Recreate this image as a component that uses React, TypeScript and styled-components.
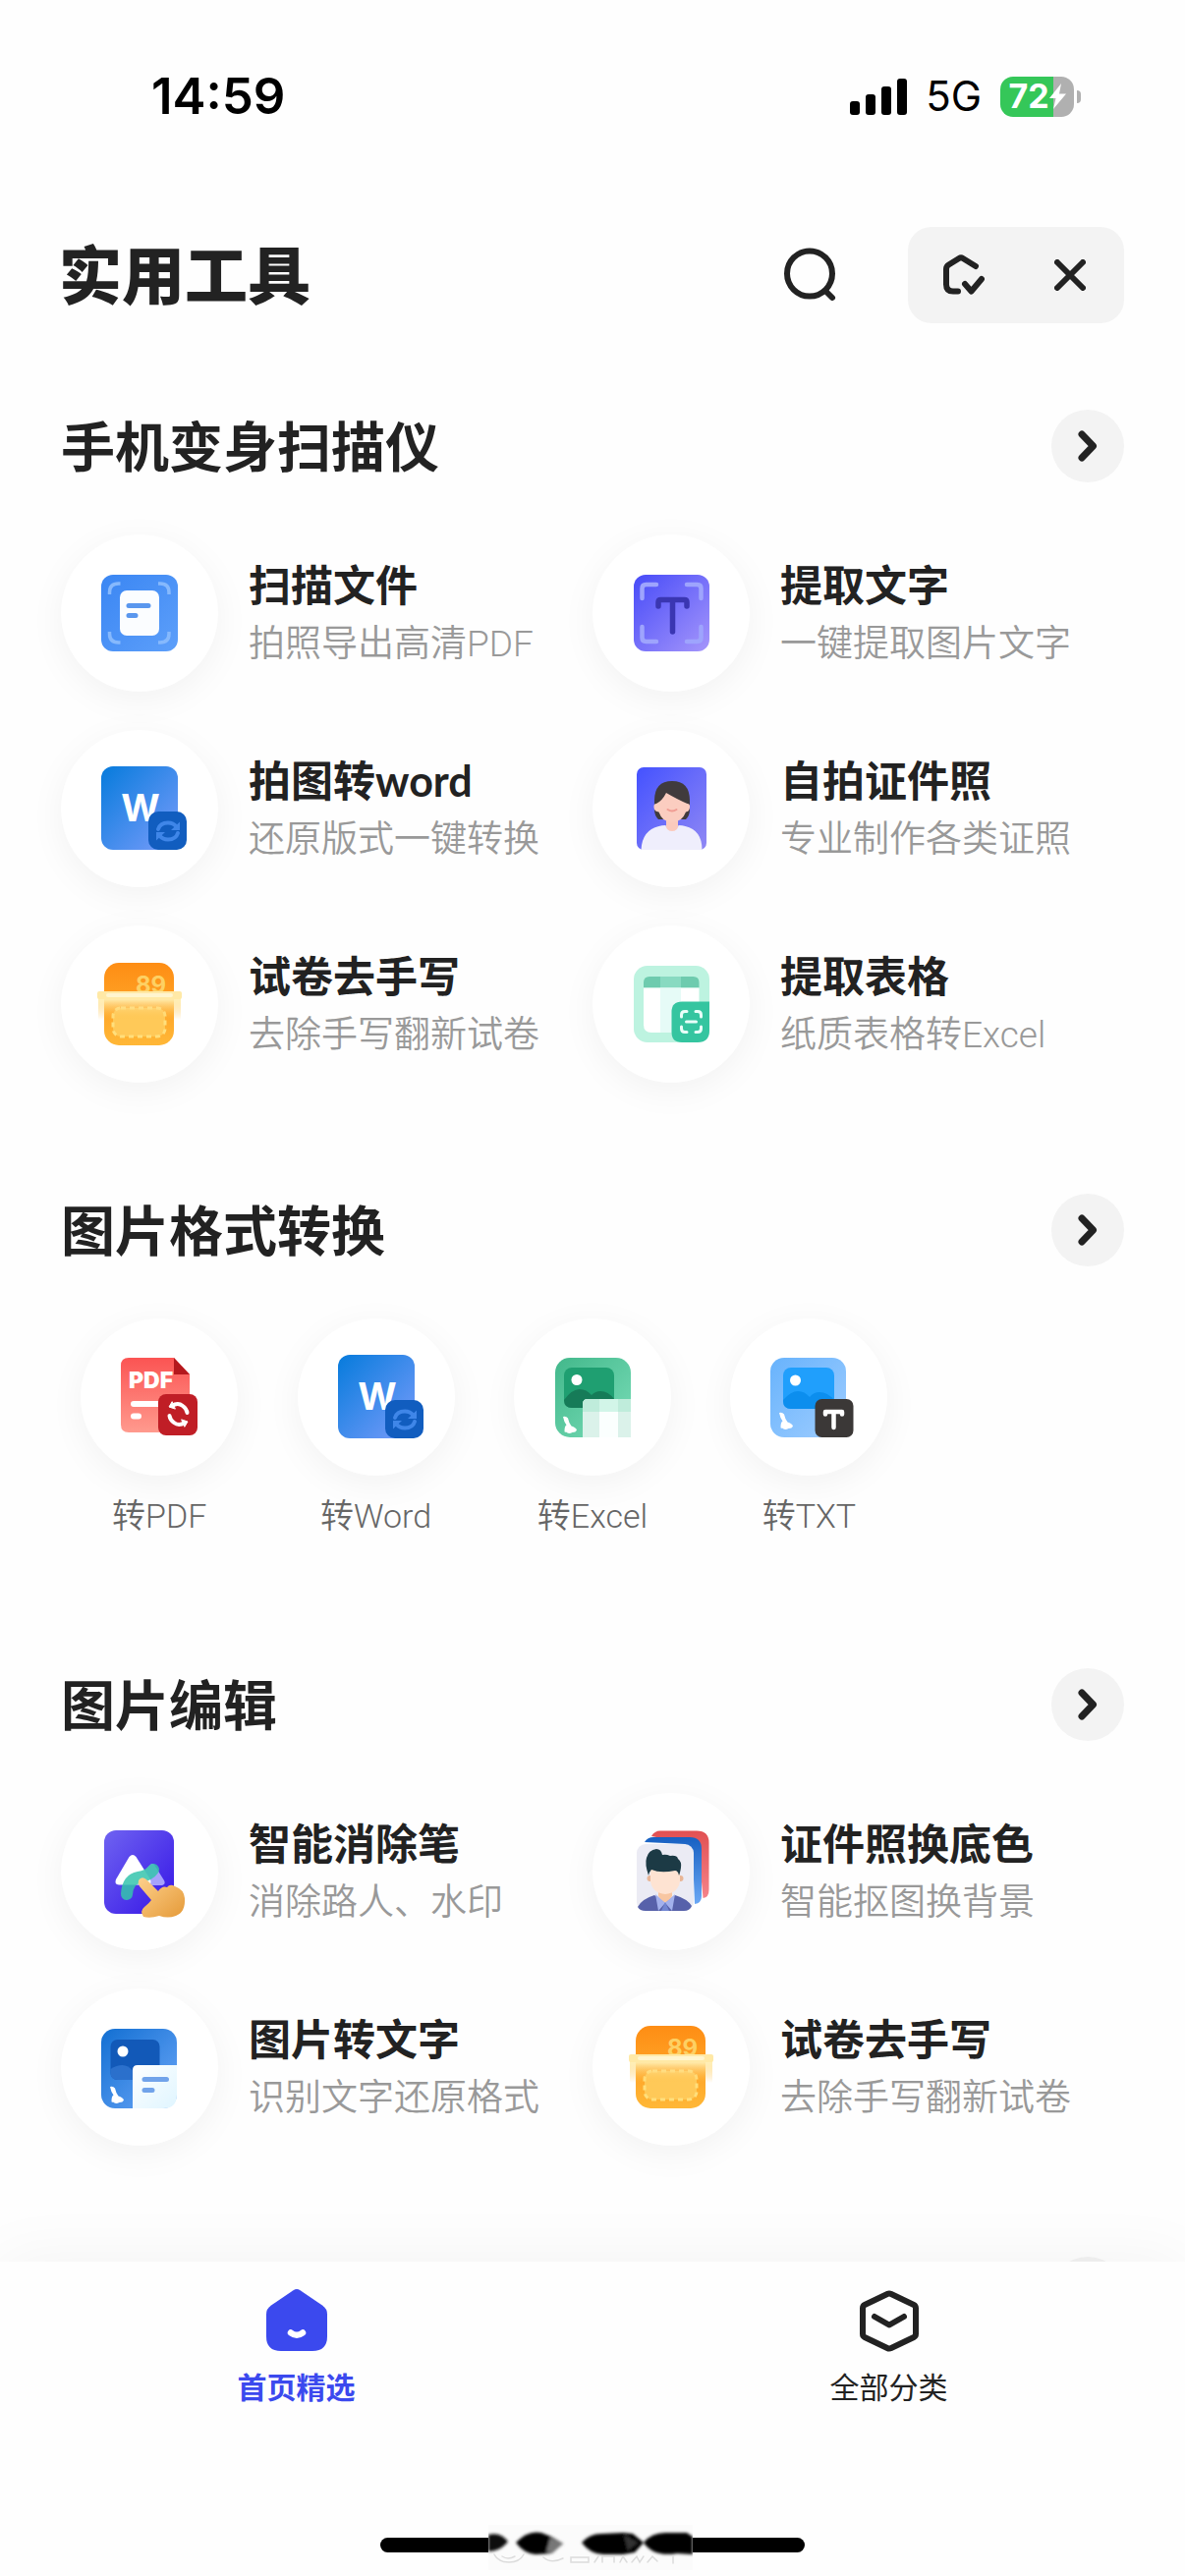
import React, { useId } from "react";
import styled, { createGlobalStyle } from "styled-components";

const heading = `Lato, "Noto Sans CJK SC", sans-serif`;
const mixed = `Roboto, "Noto Sans CJK SC", sans-serif`;
const ui = `Inter, "Noto Sans CJK SC", sans-serif`;

const GlobalStyle = createGlobalStyle`
  * { box-sizing: border-box; }
  html, body, #root { height: 100%; }
  body { margin: 0; background: #fefefe; color: #222; font-family: ${heading}; }
  h1, h2, p, ul { margin: 0; padding: 0; }
  ul { list-style: none; }
  button { border: 0; padding: 0; background: none; color: inherit; font: inherit; cursor: pointer; }
  svg { display: block; flex: none; }
`;

/* ---------- layout ---------- */

const Screen = styled.div`
  display: flex;
  flex-direction: column;
  height: 100vh;
  overflow: hidden;
`;

const StatusBar = styled.div`
  flex: none;
  display: flex;
  align-items: center;
  justify-content: space-between;
  height: 196px;
  padding: 0 106px 0 154px;
  color: #000;
  font-family: ${ui};
`;

const Clock = styled.time`
  font-size: 51px;
  font-weight: 600;
  line-height: 60px;
`;

const StatusIcons = styled.div`
  display: flex;
  align-items: center;
  gap: 19px;
`;

const Network = styled.span`
  font-size: 42px;
  font-weight: 400;
  line-height: 48px;
`;

const Battery = styled.div`
  display: flex;
  align-items: center;
  gap: 3px;
`;

const BatteryBody = styled.div`
  display: flex;
  align-items: center;
  justify-content: center;
  width: 75px;
  height: 41px;
  border-radius: 13px;
  background: linear-gradient(90deg, #35c759 72%, #b0b0b0 72%);
  color: #fff;
  font-size: 34px;
  font-weight: 700;
  line-height: 40px;
`;

const BatteryNub = styled.div`
  width: 4px;
  height: 13px;
  border-radius: 0 4px 4px 0;
  background: #b0b0b0;
`;

const Header = styled.header`
  flex: none;
  display: flex;
  align-items: center;
  padding: 35px 62px 0 60px;
`;

const AppTitle = styled.h1`
  flex: 1;
  font-size: 64px;
  font-weight: 900;
  line-height: 96px;
`;

const SearchButton = styled.button`
  margin-right: 72px;
`;

const Capsule = styled.div`
  display: flex;
  height: 98px;
  border-radius: 24px;
  background: #f3f3f3;
`;

const CapsuleButton = styled.button`
  display: flex;
  align-items: center;
  justify-content: center;
  width: 110px;
`;

const Content = styled.main`
  flex: 1 1 0;
  min-height: 0;
  display: flex;
  flex-direction: column;
  gap: 113px;
  padding-top: 88px;
  overflow-y: auto;
  scrollbar-width: none;
`;

const Section = styled.section`
  flex: none;
`;

const SectionHead = styled.div`
  display: flex;
  align-items: center;
  height: 74px;
  margin: 0 62px 53px;
`;

const SectionTitle = styled.h2`
  font-size: 55px;
  font-weight: 700;
  line-height: 74px;
`;

const MoreButton = styled.button`
  display: flex;
  align-items: center;
  justify-content: center;
  width: 74px;
  height: 74px;
  margin-left: auto;
  border-radius: 50%;
  background: #f3f3f3;
`;

const ToolGrid = styled.ul`
  display: grid;
  grid-template-columns: 1fr 1fr;
  row-gap: 39px;
  padding: 0 62px;
`;

const ToolButton = styled.button`
  display: flex;
  align-items: center;
  gap: 31px;
  width: 100%;
  text-align: left;
`;

const IconDisc = styled.span`
  flex: none;
  display: block;
  width: 160px;
  height: 160px;
  border-radius: 50%;
  background: #fff;
  box-shadow: 0 8px 36px rgba(0, 0, 0, 0.05);
`;

const ToolText = styled.span`
  display: flex;
  flex-direction: column;
  gap: 2px;
  padding-top: 4px;
  white-space: nowrap;
`;

const ToolName = styled.span`
  font-size: 43px;
  font-weight: 700;
  line-height: 58px;
`;

const ToolHint = styled.span`
  color: #999;
  font-family: ${mixed};
  font-size: 37px;
  font-weight: 350;
  line-height: 58px;
`;

const FormatGrid = styled.ul`
  display: grid;
  grid-template-columns: repeat(5, 1fr);
  padding: 0 52px 18px;
`;

const FormatButton = styled.button`
  display: flex;
  flex-direction: column;
  align-items: center;
  gap: 17px;
  width: 100%;
`;

const FormatLabel = styled.span`
  color: #666;
  font-family: ${mixed};
  font-size: 34px;
  font-weight: 350;
  line-height: 48px;
`;

const BottomBar = styled.footer`
  flex: none;
  position: relative;
  padding: 28px 0 24px;
  background: #fefefe;
  box-shadow: 0 0 64px rgba(0, 0, 0, 0.05);
`;

const Tabs = styled.nav`
  display: grid;
  grid-template-columns: 1fr 1fr;
  margin-bottom: 134px;
`;

const Tab = styled.a<{ $active?: boolean }>`
  display: flex;
  flex-direction: column;
  align-items: center;
  gap: 15px;
  color: ${(p) => (p.$active ? "#3b49ee" : "#222")};
  font-size: 30px;
  font-weight: ${(p) => (p.$active ? 700 : 400)};
  line-height: 40px;
  text-decoration: none;
`;

const HomeIndicator = styled.div`
  position: relative;
  width: 432px;
  height: 15px;
  margin: 0 auto;
  border-radius: 8px;
  background: #000;
`;

const Smudge = styled.svg`
  position: absolute;
  left: 110px;
  top: -13px;
`;

/* ---------- glyph icons ---------- */

const line = {
  fill: "none",
  stroke: "#222",
  strokeWidth: 6,
  strokeLinecap: "round" as const,
  strokeLinejoin: "round" as const,
};

const Signal = () => (
  <svg width="58" height="38" aria-hidden="true">
    <rect x="0" y="24" width="10" height="14" rx="3" />
    <rect x="16" y="17" width="10" height="21" rx="3" />
    <rect x="32" y="9" width="10" height="29" rx="3" />
    <rect x="48" y="1" width="10" height="37" rx="3" />
  </svg>
);

const Bolt = () => (
  <svg width="17" height="26" viewBox="0 0 17 26" aria-hidden="true">
    <path d="M12 0 0 15h6.500L4 26 17 10.500h-7z" fill="#fff" />
  </svg>
);

const SearchIcon = () => (
  <svg width="54" height="56" viewBox="0 0 54 56" aria-hidden="true">
    <circle cx="26" cy="26.500" r="23" {...line} />
    <path d="m42 44 7 7" {...line} />
  </svg>
);

const HouseCheckIcon = () => (
  <svg width="46" height="44" viewBox="-2 0 46 44" aria-hidden="true">
    <path
      d="M17 38.500h-5Q5 38.500 5 31.500V16q0-3 2.500-4.500L18 5q2-1.200 4 0l13 8M24 31l6.500 7.500L41 26"
      {...line}
    />
  </svg>
);

const CloseIcon = () => (
  <svg width="32" height="32" viewBox="0 0 32 32" aria-hidden="true">
    <path d="m3 3 26 26M29 3 3 29" {...line} />
  </svg>
);

const ChevronIcon = () => (
  <svg width="20" height="32" viewBox="0 0 20 32" aria-hidden="true">
    <path d="m4 4 11.500 12L4 28" {...line} strokeWidth={7} />
  </svg>
);

const HomeTabIcon = () => (
  <svg width="64" height="64" viewBox="0 0 64 64" aria-hidden="true">
    <path
      d="M28.500 1.200q3.500-2.200 7 0L58 16.500q5 3.500 5 9V48q0 15-15 15H16Q1 63 1 48V25.500q0-5.500 5-9z"
      fill="currentColor"
    />
    <path d="M26 44.500q6 4.500 12 0" fill="none" stroke="#fff" strokeWidth="6.500" strokeLinecap="round" />
  </svg>
);

const CategoryTabIcon = () => (
  <svg width="64" height="64" viewBox="0 0 64 64" aria-hidden="true">
    <path
      d="M30 5q2-1 4 0l23 11q2 1 2 3.500v26q0 2.500-2 3.500L34 60q-2 1-4 0L7 49q-2-1-2-3.500v-26Q5 17 7 16z"
      {...line}
    />
    <path d="m17 28 15 8.500L47 28" {...line} />
  </svg>
);

/* ---------- tool illustrations, drawn on the 160px disc ---------- */

type Stop = string;

const useFill = (from: Stop, to: Stop, diagonal = true) => {
  const id = "f" + useId().replace(/\W/g, "");
  const def = (
    <linearGradient id={id} x1="0" y1="0" x2={diagonal ? "1" : "0"} y2="1">
      <stop offset="0" stopColor={from} />
      <stop offset="1" stopColor={to} />
    </linearGradient>
  );
  return [def, `url(#${id})`] as const;
};

const Art = ({ children }: { children: React.ReactNode }) => (
  <svg width="160" height="160" viewBox="0 0 160 160" aria-hidden="true">
    {children}
  </svg>
);

const Sync = ({ x, y, color }: { x: number; y: number; color: string }) => (
  <g transform={`translate(${x} ${y})`} fill="none" stroke={color} strokeWidth="4" strokeLinecap="round">
    <path d="M-10-2Q-8-8.500 0-8.500q5.500 0 8.500 4" />
    <path d="M10 2Q8 8.500 0 8.500q-5.500 0-8.500-4" />
    <path d="M12-9.500V-1H3zM-12 9.500V1h9z" fill={color} stroke="none" />
  </g>
);

const ScanArt = () => {
  const [def, fill] = useFill("#3a86f3", "#5d9ffa");
  return (
    <Art>
      <defs>{def}</defs>
      <rect x="41" y="41" width="78" height="78" rx="12" fill={fill} />
      <path
        d="M49.500 61v-2q0-9 9-9h2M99 50h2q9 0 9 9v2M110 99v2q0 9-9 9h-2M60.500 110h-2q-9 0-9-9v-2"
        fill="none"
        stroke="#86b9fd"
        strokeWidth="3.500"
      />
      <rect x="60" y="57" width="40" height="46" rx="7" fill="#fbfdff" />
      <path d="M69 72.500h20M69 82.500h7" stroke="#5a97ee" strokeWidth="5" strokeLinecap="round" />
    </Art>
  );
};

const ExtractTextArt = () => {
  const [def, fill] = useFill("#474bf8", "#a596fb");
  return (
    <Art>
      <defs>{def}</defs>
      <rect x="42" y="41" width="77" height="78" rx="12" fill={fill} />
      <path
        d="M50.500 65V55q0-4 4-4H65M96 51h10.500q4 0 4 4v10M110.500 94v11q0 4-4 4H96M65 109H54.500q-4 0-4-4V94"
        fill="none"
        stroke="#9ea4fd"
        strokeWidth="4.500"
        strokeLinecap="round"
      />
      <path
        d="M67 73v-4q0-2.500 2.500-2.500h24q2.500 0 2.500 2.500v4M81.500 67v32"
        fill="none"
        stroke="#3a36b2"
        strokeWidth="5.500"
        strokeLinecap="round"
      />
    </Art>
  );
};

const WordArt = () => {
  const [def, fill] = useFill("#067bdc", "#7a9cfb");
  return (
    <Art>
      <defs>{def}</defs>
      <rect x="41" y="37" width="78" height="85" rx="12" fill={fill} />
      <text x="81" y="93" textAnchor="middle" fontFamily="Inter, sans-serif" fontSize="38" fontWeight="650" fill="#fff">
        W
      </text>
      <rect x="89" y="83" width="39" height="39" rx="10" fill="#115dbf" />
      <Sync x={109} y={103} color="#3f86e8" />
    </Art>
  );
};

const PortraitArt = () => {
  const [def, fill] = useFill("#4452ff", "#9088f4");
  return (
    <Art>
      <defs>{def}</defs>
      <rect x="45" y="38" width="71" height="84" rx="7" fill={fill} />
      <path d="M63 72q0-20 18-20t18 20v9q0 6-4 10H67q-4-4-4-10z" fill="#403b3d" />
      <path d="M75 88h12v11q4 3 7 3-6 8-13 8t-13-8q4 0 7-3z" fill="#fbcabd" />
      <path
        d="M75 64q-4 8-10 11-3 0-2.500 4t5 4.500Q71 94 81 94t14-10.500q3.500-.5 4-4.500t-2.500-4Q87 71 75 64z"
        fill="#fbcdc0"
      />
      <path d="M76.500 81q4.500 3 9 0" fill="none" stroke="#f09c93" strokeWidth="2" strokeLinecap="round" />
      <path d="M49.500 122q1-20 18-24 3-1 7-1 1 6 6.500 6t6.500-6q4 0 7 1 17 4 17 24z" fill="#efeefc" />
    </Art>
  );
};

const ExamArt = () => {
  const [def, fill] = useFill("#fe8d14", "#ffb737", false);
  const [glowDef, glow] = useFill("#fff1b8", "#ffc14a00", false);
  return (
    <Art>
      <defs>
        {def}
        {glowDef}
      </defs>
      <rect x="44" y="38" width="71" height="84" rx="15" fill={fill} />
      <text x="76" y="69" fontFamily="Inter, sans-serif" fontSize="24" fontWeight="700" fill="#fdd063">
        89
      </text>
      <rect
        x="53"
        y="84"
        width="53"
        height="29"
        rx="8"
        fill="#ffc958"
        stroke="#ffdf7c"
        strokeWidth="3"
        strokeDasharray="5 4"
      />
      <rect x="38" y="74" width="84" height="22" fill={glow} />
      <rect x="37" y="67" width="86" height="8" rx="2" fill="#ffe9a6" />
      <rect x="46" y="69" width="68" height="4" rx="2" fill="#fff5cf" />
    </Art>
  );
};

const TableArt = () => (
  <Art>
    <rect x="42" y="41" width="77" height="78" rx="14" fill="#bdf3e0" />
    <path d="M52 63.500V58q0-6 6-6h44.500q6 0 6 6v5.500z" fill="#6ecbae" />
    <path d="M69 52h21v11.500H69z" fill="#88dac1" />
    <path d="M52 63.500h56.500V109H60q-8 0-8-8z" fill="#fff" />
    <path d="M69 63.500h21V109H69z" fill="#e6fbf7" />
    <path d="M80.500 88q0-10.500 10.500-10.500h28V107q0 12-12 12H91q-10.500 0-10.500-10.500z" fill="#35c5a0" />
    <path
      d="M90.500 93v-2q0-3.500 3.500-3.500h2M105 87.500h2q3.500 0 3.500 3.500v2M110.500 103v2q0 3.500-3.500 3.500h-2M96 108.500h-2q-3.500 0-3.500-3.500v-2M95.500 98h10"
      fill="none"
      stroke="#e9fff9"
      strokeWidth="3"
      strokeLinecap="round"
    />
  </Art>
);

const PdfArt = () => {
  const [def, fill] = useFill("#fb5453", "#ff9a8e", false);
  return (
    <Art>
      <defs>{def}</defs>
      <path d="M49 40h46l16 17v51q0 8-8 8H49q-8 0-8-8V48q0-8 8-8z" fill={fill} />
      <path d="M95 40v17h16z" fill="#b4181d" />
      <text x="49" y="70.500" fontFamily="Inter, sans-serif" fontSize="23" fontWeight="900" fill="#fff">
        PDF
      </text>
      <path d="M54 87h28M54 99.500h5" stroke="#fff" strokeWidth="6" strokeLinecap="round" />
      <rect x="79" y="77" width="40" height="42" rx="8" fill="#c01e26" />
      <g fill="none" stroke="#fff" strokeWidth="4" strokeLinecap="round">
        <path d="M93 89q6-4 11 0 4 3 4.500 7" />
        <path d="M106 106q-6 4-11 0-4-3-4.500-7" />
        <path d="m93 85-3 5 6 2zM106 110l3-5-6-2z" fill="#fff" strokeWidth="1" />
      </g>
    </Art>
  );
};

const Bird = ({ y = 0 }: { y?: number }) => (
  <path
    transform={`translate(0 ${y})`}
    d="M50 100q3-1 5 1.500 1 5 3.500 8 4.500 1.500 5.500 4-1 2.500-4.500 2.500-4 2-6.500-.5-1.500 1-1.500-1 0-5 2-6-2.500-3-3.500-8.500z"
    fill="#fff"
  />
);

const ExcelArt = () => {
  const [def, fill] = useFill("#42b88b", "#7addb8");
  return (
    <Art>
      <defs>{def}</defs>
      <rect x="42" y="40" width="77" height="81" rx="15" fill={fill} />
      <rect x="51" y="50" width="51" height="41" rx="8" fill="#1f9f71" />
      <path d="M51 83q8-11 16-11 7 0 12 6 4-4 9-4 8 0 14 8v1q0 8-8 8H59q-8 0-8-8z" fill="#167b58" />
      <circle cx="64" cy="62.500" r="5.500" fill="#fff" />
      <path d="M70 121V87q0-5 5-5h44v39z" fill="#dbf2ea" />
      <path d="M70 95v-8q0-5 5-5h44v13z" fill="#bfecdb" />
      <path d="M87 82h19v13H87z" fill="#d2f5e8" />
      <path d="M87 95h19v26H87z" fill="#fbfffe" />
      <Bird />
    </Art>
  );
};

const TxtArt = () => {
  const [def, fill] = useFill("#68b3fc", "#9fcdff");
  return (
    <Art>
      <defs>{def}</defs>
      <rect x="41" y="40" width="77" height="81" rx="14" fill={fill} />
      <rect x="54" y="50" width="52" height="42" rx="8" fill="#209ffc" />
      <path d="M54 83q8-9 15-9t12 6q4-5 10-5 8 0 15 8v1q0 8-8 8H62q-8 0-8-8z" fill="#0c8eee" />
      <circle cx="66.500" cy="63" r="5.500" fill="#fff" />
      <rect x="86.500" y="82" width="39" height="39" rx="7" fill="#3b3837" />
      <path
        d="M97 97.500V95h17v2.500M105.500 95v16"
        fill="none"
        stroke="#fff"
        strokeWidth="4.500"
        strokeLinecap="round"
        strokeLinejoin="round"
      />
      <Bird y={-4} />
    </Art>
  );
};

const EraserArt = () => {
  const [def, fill] = useFill("#6f63f1", "#3514e6");
  const [handDef, hand] = useFill("#fdd08c", "#e59a38");
  return (
    <Art>
      <defs>
        {def}
        {handDef}
      </defs>
      <rect x="44" y="38" width="71" height="85" rx="12" fill={fill} />
      <path d="M91 73q2-2 4 0l10 16q2 4-2 5H84l-5-9z" fill="#a6a2fb" />
      <path d="M69.500 65q3.500-4 7 0L91 88q2 5-3 5.500H59q-5-.5-3-5.500z" fill="#fff" />
      <path
        d="M67 103q1-15 12-17t15-8"
        fill="none"
        stroke="#35c4ad"
        strokeOpacity="0.850"
        strokeWidth="12"
        strokeLinecap="round"
      />
      <path
        d="M79 89q3-5 8-1l12 12q4-6 9-4 3-4 8-1 9 3 10 12 1 14-9 18-8 3-17 0-9 3-16 1-4-6 1-10 5-4 7-7L80 95q-2-3-1-6z"
        fill={hand}
      />
    </Art>
  );
};

const IdPhotoArt = () => {
  const [redDef, red] = useFill("#e15052", "#f5838a", false);
  const [blueDef, blue] = useFill("#1760c2", "#6ba8f5", false);
  return (
    <Art>
      <defs>
        {redDef}
        {blueDef}
      </defs>
      <path d="M60 44q3-5.500 9-5.500h37q12.500 0 12.500 12v48q0 8-6 8.500l-4-44-8-11z" fill={red} />
      <path d="M53 50q3-5 9-5h37q12 0 12 12v48q0 7-7 8l-2-50-8-11z" fill={blue} />
      <rect x="45" y="52" width="58" height="68" rx="9" fill="#ebebf4" />
      <path d="M67 92h14v13q-7 12-14 0z" fill="#f8c6a1" />
      <circle cx="58.500" cy="87" r="3" fill="#e8b596" />
      <circle cx="89.500" cy="87" r="3" fill="#e8b596" />
      <path d="M59 78h30v12q-2 12-15 13-13-1-15-13z" fill="#fee3d2" />
      <path
        d="M57 84q-4-12-2-18 2-8 10-9 5 0 6 6 4-1 8 1 7-1 8 3 4 3 3 9-1 6-2 8-1-5-4-5-15 3-24-1-2 2-3 6z"
        fill="#1c3a45"
      />
      <path d="M46 116q4-8 17-12l11 8 10-8q13 4 17 11-2 5-8 5H54q-6 0-8-4z" fill="#5761aa" />
      <path d="m64 103 10 9-7 8zM84 103l-10 9 7 8z" fill="#a3b1ec" />
      <path d="m74 111 4 9h-8z" fill="#7186d2" />
    </Art>
  );
};

const PictureTextArt = () => {
  const [def, fill] = useFill("#126fd2", "#6aa6f8");
  const [sheetDef, sheet] = useFill("#ffffff", "#dff5ff");
  return (
    <Art>
      <defs>
        {def}
        {sheetDef}
      </defs>
      <rect x="41" y="41" width="77" height="81" rx="14" fill={fill} />
      <rect x="50.500" y="52" width="50" height="41" rx="7" fill="#1259b8" />
      <path d="M50.500 82q6-4 12-4t11 6v9H57.500q-7 0-7-7z" fill="#2b70cc" />
      <circle cx="63" cy="64" r="5.500" fill="#fff" />
      <path d="M73 122V83q0-5 5-5h40v30q0 14-14 14z" fill={sheet} />
      <path d="M85 92.500h22.500M85 103.500h8" stroke="#71a3ea" strokeWidth="5" strokeLinecap="round" />
      <Bird />
    </Art>
  );
};

/* ---------- data ---------- */

type Tool = { name: string; hint: string; Icon: React.FC };

const scanner: Tool[] = [
  { name: "扫描文件", hint: "拍照导出高清PDF", Icon: ScanArt },
  { name: "提取文字", hint: "一键提取图片文字", Icon: ExtractTextArt },
  { name: "拍图转word", hint: "还原版式一键转换", Icon: WordArt },
  { name: "自拍证件照", hint: "专业制作各类证照", Icon: PortraitArt },
  { name: "试卷去手写", hint: "去除手写翻新试卷", Icon: ExamArt },
  { name: "提取表格", hint: "纸质表格转Excel", Icon: TableArt },
];

const formats: { name: string; Icon: React.FC }[] = [
  { name: "转PDF", Icon: PdfArt },
  { name: "转Word", Icon: WordArt },
  { name: "转Excel", Icon: ExcelArt },
  { name: "转TXT", Icon: TxtArt },
];

const editing: Tool[] = [
  { name: "智能消除笔", hint: "消除路人、水印", Icon: EraserArt },
  { name: "证件照换底色", hint: "智能抠图换背景", Icon: IdPhotoArt },
  { name: "图片转文字", hint: "识别文字还原格式", Icon: PictureTextArt },
  { name: "试卷去手写", hint: "去除手写翻新试卷", Icon: ExamArt },
];

/* ---------- parts ---------- */

const SectionHeader = ({ title }: { title?: string }) => (
  <SectionHead>
    {title && <SectionTitle>{title}</SectionTitle>}
    <MoreButton type="button">
      <ChevronIcon />
    </MoreButton>
  </SectionHead>
);

const ToolList = ({ tools }: { tools: Tool[] }) => (
  <ToolGrid>
    {tools.map(({ name, hint, Icon }) => (
      <li key={name}>
        <ToolButton type="button">
          <IconDisc>
            <Icon />
          </IconDisc>
          <ToolText>
            <ToolName>{name}</ToolName>
            <ToolHint>{hint}</ToolHint>
          </ToolText>
        </ToolButton>
      </li>
    ))}
  </ToolGrid>
);

const IndicatorSmudge = () => (
  <Smudge width="208" height="46" viewBox="0 0 208 46" aria-hidden="true">
    <defs>
      <filter id="smudge" x="-10%" y="-30%" width="120%" height="160%">
        <feGaussianBlur stdDeviation="1.500" />
      </filter>
    </defs>
    <rect width="208" height="46" fill="#fbfbfb" />
    <g filter="url(#smudge)">
      <path d="M0 10q12-3 20 7-8 10-20 10z" fill="#111" />
      <path d="M28 18q12-13 26-10l10 4 12 7-12 10-16 1q-12-1-20-12z" />
      <path d="m63 13 13 6-11 10-6-2z" fill="#777" />
      <path d="M95 18q8-9 20-9l22-1 10 1 11 9-9 10-12 2h-20q-13 0-22-12z" />
      <path d="m138 10 14 8-10 8z" fill="#333" />
      <path d="M158 18q8-10 22-10h22l6 4v18l-16-1q-24 4-34-11z" />
    </g>
    <g fill="none" stroke="#dcdcdc" strokeWidth="1.500" strokeLinecap="round">
      <path d="M6 30q4 8 15 8t15-8M14 32q6 4 13 0M56 33q8 7 20 1" />
      <path d="M84 38v-5h18v5zM108 38l4-6M116 38v-6h12v6M134 38l3-6 4 6M146 38l5-6 3 6 4-6M162 38l5-6 5 5M188 32v7" />
    </g>
  </Smudge>
);

export default function App() {
  return (
    <Screen>
      <GlobalStyle />
      <StatusBar>
        <Clock>14:59</Clock>
        <StatusIcons>
          <Signal />
          <Network>5G</Network>
          <Battery>
            <BatteryBody>
              72
              <Bolt />
            </BatteryBody>
            <BatteryNub />
          </Battery>
        </StatusIcons>
      </StatusBar>

      <Header>
        <AppTitle>实用工具</AppTitle>
        <SearchButton type="button" aria-label="搜索">
          <SearchIcon />
        </SearchButton>
        <Capsule>
          <CapsuleButton type="button" aria-label="首页">
            <HouseCheckIcon />
          </CapsuleButton>
          <CapsuleButton type="button" aria-label="关闭">
            <CloseIcon />
          </CapsuleButton>
        </Capsule>
      </Header>

      <Content>
        <Section>
          <SectionHeader title="手机变身扫描仪" />
          <ToolList tools={scanner} />
        </Section>

        <Section>
          <SectionHeader title="图片格式转换" />
          <FormatGrid>
            {formats.map(({ name, Icon }) => (
              <li key={name}>
                <FormatButton type="button">
                  <IconDisc>
                    <Icon />
                  </IconDisc>
                  <FormatLabel>{name}</FormatLabel>
                </FormatButton>
              </li>
            ))}
          </FormatGrid>
        </Section>

        <Section>
          <SectionHeader title="图片编辑" />
          <ToolList tools={editing} />
        </Section>

        <Section>
          <SectionHeader />
        </Section>
      </Content>

      <BottomBar>
        <Tabs>
          <Tab href="#home" $active>
            <HomeTabIcon />
            首页精选
          </Tab>
          <Tab href="#all">
            <CategoryTabIcon />
            全部分类
          </Tab>
        </Tabs>
        <HomeIndicator>
          <IndicatorSmudge />
        </HomeIndicator>
      </BottomBar>
    </Screen>
  );
}
